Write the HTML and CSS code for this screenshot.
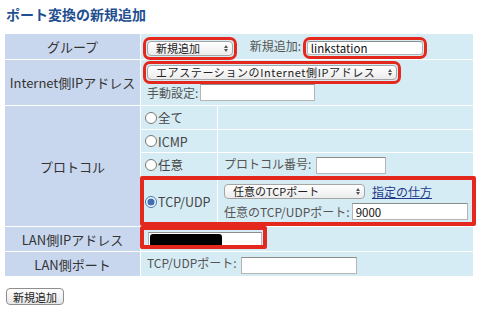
FILE: index.html
```html
<!DOCTYPE html>
<html lang="ja">
<head>
    <meta charset="UTF-8">
    <title>ポート変換の新規追加</title>
    <link rel="stylesheet" href="styles.css">
</head>
<body>
    <h2 class="title">ポート変換の新規追加</h2>

    <div class="wrap">
        <table class="form">
            <colgroup>
                <col class="c-head">
                <col class="c-radio">
                <col>
            </colgroup>
            <tr class="r-group">
                <th>グループ</th>
                <td colspan="2">
                    <span class="sel sel-group mark">
                        <select><option>新規追加</option></select>
                    </span>
                    <span class="label gap">新規追加:</span>
                    <input type="text" class="txt txt-name mark" value="linkstation">
                </td>
            </tr>
            <tr class="r-inet">
                <th>Internet側IPアドレス</th>
                <td colspan="2">
                    <div class="line">
                        <span class="sel sel-inet mark">
                            <select><option>エアステーションのInternet側IPアドレス</option></select>
                        </span>
                    </div>
                    <div class="line">
                        <span class="label">手動設定:</span>
                        <input type="text" class="txt txt-manual">
                    </div>
                </td>
            </tr>
            <tr class="r-all">
                <th rowspan="4">プロトコル</th>
                <td class="radio"><label><input type="radio" name="proto">全て</label></td>
                <td></td>
            </tr>
            <tr class="r-icmp">
                <td class="radio"><label><input type="radio" name="proto">ICMP</label></td>
                <td></td>
            </tr>
            <tr class="r-any">
                <td class="radio"><label><input type="radio" name="proto">任意</label></td>
                <td>
                    <span class="label">プロトコル番号:</span>
                    <input type="text" class="txt txt-num">
                </td>
            </tr>
            <tr class="r-tcp">
                <td class="radio"><label><input type="radio" name="proto" checked>TCP/UDP</label></td>
                <td>
                    <div class="line">
                        <span class="sel sel-tcp">
                            <select><option>任意のTCPポート</option></select>
                        </span>
                        <a href="#" class="help">指定の仕方</a>
                    </div>
                    <div class="line">
                        <span class="label">任意のTCP/UDPポート:</span>
                        <input type="text" class="txt txt-port" value="9000">
                    </div>
                </td>
            </tr>
            <tr class="r-lanip">
                <th>LAN側IPアドレス</th>
                <td colspan="2">
                    <span class="txt txt-lanip"><span class="redact"></span></span>
                </td>
            </tr>
            <tr class="r-lanport">
                <th>LAN側ポート</th>
                <td colspan="2">
                    <span class="label">TCP/UDPポート:</span>
                    <input type="text" class="txt txt-lanport">
                </td>
            </tr>
        </table>

        <!-- annotation boxes drawn over the table -->
        <div class="box box-tcp"></div>
        <div class="box box-lanip"></div>
    </div>

    <button class="add-button">新規追加</button>
</body>
</html>
```

FILE: styles.css
```css
body {
    margin: 0;
    padding: 0 4px;
    font-family: "Noto Sans CJK JP", "Noto Sans", sans-serif;
    font-size: 12px;
    color: #333;
    background-color: #fff;
}

.title {
    margin: 0;
    padding: 4px 2px 0;
    height: 33px;
    box-sizing: border-box;
    font-size: 14px;
    line-height: 20px;
    font-weight: bold;
    color: #1f4f8f;
}

.wrap {
    position: relative;
    width: 470px;
}

.form {
    border-collapse: separate;
    border-spacing: 1px;
    width: 470px;
    table-layout: fixed;
}

.c-head { width: 135px; }
.c-radio { width: 76px; }

.form th {
    padding: 0;
    background-color: #c8d7ee;
    font-weight: normal;
    font-size: 13px;
    color: #333;
    text-align: center;
}

.form td {
    padding: 0 0 0 6px;
    background-color: #d6ecf4;
    vertical-align: middle;
    white-space: nowrap;
}

.form td.radio {
    padding-left: 4px;
}

.r-group { height: 25px; }
.r-inet { height: 45px; }
.r-all { height: 23px; }
.r-icmp { height: 22px; }
.r-any { height: 23px; }
.r-tcp { height: 49px; }
.r-lanip { height: 24px; }
.r-lanport { height: 24px; }

.line {
    display: flex;
    align-items: center;
    height: 20px;
}

.label {
    color: #555;
}

.gap {
    margin-left: 14px;
}

.radio label {
    display: flex;
    align-items: center;
    color: #444;
    font-size: 12.5px;
}

.radio input {
    margin: 0 1px 0 0;
    width: 12px;
    height: 12px;
    accent-color: #3f6fb0;
}

/* selects */
.sel {
    position: relative;
    display: inline-block;
    vertical-align: middle;
}

.sel select {
    appearance: none;
    -webkit-appearance: none;
    display: block;
    height: 15px;
    padding: 0 14px 0 8px;
    border: 1px solid #a5a5a5;
    border-radius: 4px;
    background-color: #fff;
    background-image: linear-gradient(#ffffff, #ececec);
    font-family: "Noto Sans CJK JP", sans-serif;
    font-size: 11px;
    line-height: 13px;
    color: #222;
}

.sel::after {
    content: "";
    position: absolute;
    right: 5px;
    top: 4px;
    width: 0;
    height: 0;
    border-left: 2px solid transparent;
    border-right: 2px solid transparent;
    border-bottom: 3px solid #555;
}

.sel::before {
    content: "";
    position: absolute;
    right: 5px;
    top: 8px;
    width: 0;
    height: 0;
    border-left: 2px solid transparent;
    border-right: 2px solid transparent;
    border-top: 3px solid #555;
    z-index: 1;
}

.sel-group select { width: 86px; }
.sel-inet select { width: 250px; letter-spacing: 0.6px; }
.sel-tcp select { width: 141px; }

.mark {
    outline: 3px solid #e5281e;
    outline-offset: 1px;
    border-radius: 3px;
}

/* text inputs */
.txt {
    display: inline-block;
    vertical-align: middle;
    box-sizing: border-box;
    height: 17px;
    padding: 0 3px;
    border: 1px solid #b5b5b5;
    border-top-color: #8c8c8c;
    background-color: #fff;
    font-family: "Noto Sans CJK JP", sans-serif;
    font-size: 11.5px;
    color: #111;
}

.txt-name { width: 116px; height: 14px; margin-left: 3px; }
.txt-manual { width: 115px; margin-left: 2px; }
.txt-num { width: 70px; margin-left: 2px; }
.txt-port { width: 116px; margin-left: 2px; }
.txt-lanport { width: 116px; margin-left: 2px; }

.txt-lanip {
    width: 114px;
    height: 16px;
    margin-left: 1px;
    padding: 1px;
}

.redact {
    display: block;
    width: 72px;
    height: 13px;
    background-color: #000;
    border-radius: 3px;
}

.help {
    margin-left: 7px;
    color: #1d3a8a;
    font-size: 12px;
}

.box {
    position: absolute;
    border: 4px solid #e5281e;
    border-radius: 2px;
    box-sizing: border-box;
}

.box-tcp {
    left: 136px;
    top: 143px;
    width: 336px;
    height: 50px;
}

.box-lanip {
    left: 136px;
    top: 193px;
    width: 127px;
    height: 23px;
}

.add-button {
    margin: 11px 0 0 2px;
    height: 17px;
    padding: 0 6px;
    border: 1px solid #8e8e8e;
    border-radius: 4px;
    background-image: linear-gradient(#ffffff, #e6e6e6);
    font-family: "Noto Sans CJK JP", sans-serif;
    font-size: 11px;
    line-height: 14px;
    color: #222;
}
```
